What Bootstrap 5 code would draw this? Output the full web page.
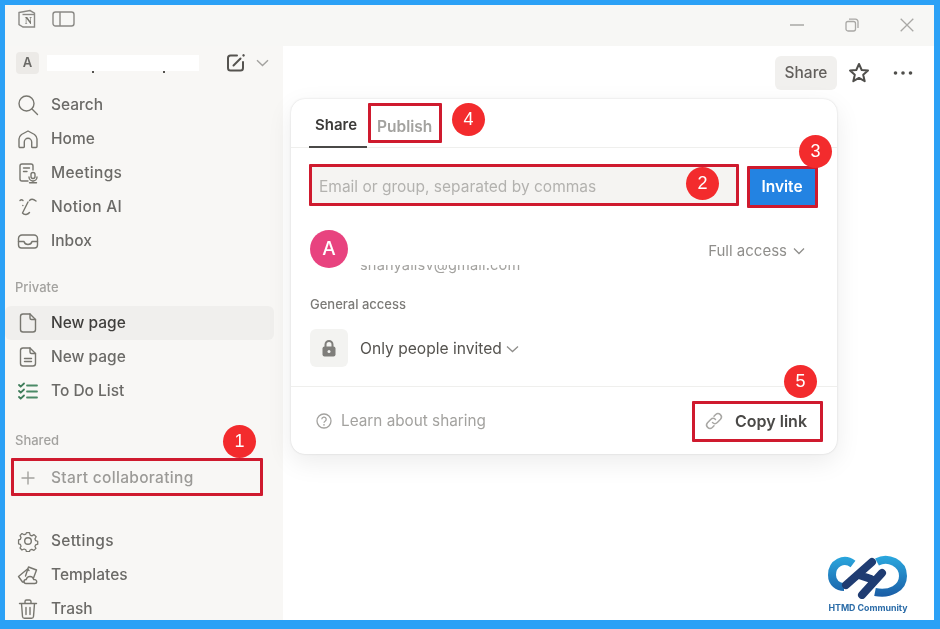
<!doctype html>
<html lang="en">
<head>
<meta charset="utf-8">
<title>Notion share</title>
<link href="https://cdn.jsdelivr.net/npm/bootstrap@5.3.0/dist/css/bootstrap.min.css" rel="stylesheet">
<style>
html,body{height:100%;margin:0;overflow:hidden;background:#fff}
body{font-family:Inter,"Liberation Sans",sans-serif}
.frame{position:relative;width:940px;height:629px;border-style:solid;border-color:#2ba1f6;border-width:5px 6px 9px 5px;background:#fff;overflow:hidden;filter:blur(.35px)}
.anno-layer{position:absolute;inset:0;pointer-events:none}
.titlebar{height:41px;background:#f7f7f5;flex:none}
.ti{stroke:#8a8985;fill:none;stroke-width:1.4}
.tleft{gap:15px;padding-left:12px;margin-top:-13px}
.winbtns{gap:41px;padding-right:20px;margin-top:-2px}
.side{width:278px;flex:none;background:#f8f7f5;overflow:hidden}
.mainpane{min-width:0}
.ws{height:34px;padding-left:11px}
.ws-a{width:23px;height:22px;background:#eceae7;border-radius:4px;color:#6a6966;font-size:13px;font-weight:600}
.ws-name{position:relative;width:152px;height:16px;background:#fff;margin-left:8px}
.ws-name::after{content:"";position:absolute;left:45px;top:16px;width:2px;height:2px;background:#55534f;box-shadow:71px 0 #55534f}
.ws-tail{margin-left:26px;gap:9px}
.navrows{margin-top:8px}
.srow{height:34px;padding-left:12px;gap:12px;color:#6b6a67;font-size:15.5px;font-weight:500;width:269px;border-radius:6px;white-space:nowrap}
.srow svg{width:22px;height:22px;flex:none;stroke:#77766f;fill:none;stroke-width:1.4;stroke-linecap:round;stroke-linejoin:round}
.srow.on{background:#f0efed;color:#3f3e3c}
.srow.dim{color:#9b9a97;letter-spacing:.32px}
.srow.dim svg{stroke:#a3a29e}
.stretchy{letter-spacing:.3px}
.sl{height:20px;line-height:20px;padding-left:10px;font-size:13px;font-weight:500;color:#a3a29f}
.m-private{margin-top:19px}.m-afterprivate{margin-top:9px}
.m-shared{margin-top:22px}.m-aftershared{margin-top:11px}.m-bottom{margin-top:29px}
.tools{height:54px;padding-left:492px}
.sharebtn{width:62px;height:34px;border-radius:6px;background:#f1f0ee;color:#625f5c;font-size:15.5px;font-weight:500}
.tools svg{flex:none}
.pop{position:absolute;left:286px;top:94px;width:546px;height:355px;background:#fff;border-radius:14px;box-shadow:0 0 2px rgba(15,15,15,.16),0 8px 26px rgba(15,15,15,.08)}
.tabs{height:49px;padding-left:18px;border-bottom:1px solid #efefed}
.tb{height:49px;padding-top:6px;font-weight:600;white-space:nowrap}
.tb-on{width:58px;padding-right:4px;font-size:15px;color:#3c3b39;border-bottom:2px solid #4a4947;justify-content:center}
.tb-off{color:#a3a29f;font-size:15.5px;margin-left:10px}
.inviteline{padding:18px 0 0 19px;height:70px}
.emailbox{width:426px;height:40px;background:#f5f4f2;border-radius:4px;padding:2px 0 0 9px;color:#b3b2af;font-size:15.5px;font-weight:400}
.invitebtn{width:68px;height:40px;margin-left:12px;background:#2383e2;border-radius:4px;color:#fff;font-size:15.5px;font-weight:600;border:0;padding:2px 0 0}
.person{height:62px;padding:0 32px 0 19px}
.avatar{width:38px;height:38px;border-radius:50%;background:#e8437f;color:#fff;font-size:19px;font-weight:500;flex:none}
.masked{position:relative;margin:31px 0 0 12px;font-size:14.6px;letter-spacing:.15px;line-height:18px;color:#a3a29f;white-space:nowrap}
.masked::after{content:"";position:absolute;left:-2px;right:-2px;top:-4px;height:13px;background:#fff}
.fullacc{color:#8f8e8b;font-size:15px;gap:6px;padding-top:4px}
.gtitle{margin:14px 0 0 19px;height:20px;line-height:20px;font-size:13px;font-weight:500;color:#7b7a77}
.glock{margin:15px 0 0 19px;gap:12px;height:38px}
.lockbox{width:38px;height:38px;background:#f3f3f1;border-radius:6px;flex:none}
.gtext{color:#55534f;font-size:15.6px;white-space:nowrap;padding-top:2px}
.popfoot{margin-top:19px;height:68px;border-top:1px solid #efefed;padding:1px 30px 0 25px}
.learn{gap:9px;color:#a3a29f;font-size:15.3px;white-space:nowrap}
.copy{gap:11px;color:#4a4947;font-size:16px;font-weight:600;white-space:nowrap}
.rbox{position:absolute;border:3px solid #cf1a2e;border-radius:1px}
.b1{left:6px;top:453px;width:252px;height:38px}
.b4{left:363px;top:98px;width:74px;height:40px}
.b2{left:304px;top:159px;width:430px;height:42px}
.b3{left:742px;top:161px;width:71px;height:42px}
.b5{left:687px;top:396px;width:131px;height:41px}
.pin{position:absolute;width:33px;height:33px;border-radius:50%;background:#f32b2d;color:#fff;font-size:18px;font-weight:500;font-family:"Liberation Sans",sans-serif;display:flex;align-items:center;justify-content:center}
.p1{left:218px;top:420px}.p2{left:681px;top:162px}.p3{left:794px;top:130px}.p4{left:447px;top:98px}.p5{left:779px;top:360px}
.brand{position:absolute;left:823px;top:550px;width:80px}
.brand svg{display:block}
.brand-t{font-size:8.8px;font-weight:700;color:#2b6ca8;line-height:11px;white-space:nowrap;margin-top:3px;text-align:center}
</style>
</head>
<body>
<div class="frame d-flex flex-column">
  <div class="titlebar d-flex align-items-center">
    <div class="d-flex align-items-center tleft">
      <svg width="20" height="20" viewBox="0 0 20 20"><path class="ti" d="M2 3.5 13 1.6l4.500 2.600V18H6L2 15.500Z"/><path class="ti" d="M5.500 5.500H17"/><text x="11.300" y="15" text-anchor="middle" font-size="10" font-weight="700" fill="#77766f" font-family="Liberation Serif, serif">N</text></svg>
      <svg width="24" height="18" viewBox="0 0 24 18"><rect class="ti" x="1" y="2" width="21" height="14" rx="2.500"/><path class="ti" d="M8 2v14"/></svg>
    </div>
    <div class="d-flex align-items-center ms-auto winbtns">
      <svg width="14" height="14" viewBox="0 0 14 14"><path d="M0 7h14" stroke="#a9a8a5" stroke-width="1.500"/></svg>
      <svg width="14" height="14" viewBox="0 0 14 14" fill="none" stroke="#a9a8a5" stroke-width="1.300"><rect x="1" y="3.500" width="9.500" height="9.500" rx="2"/><path d="M4 1.200h6.500a2.500 2.500 0 0 1 2.500 2.500V10"/></svg>
      <svg width="14" height="14" viewBox="0 0 14 14"><path d="M.7.700l12.600 12.600M13.300.700.700 13.300" stroke="#a9a8a5" stroke-width="1.300"/></svg>
    </div>
  </div>
  <div class="d-flex flex-grow-1" style="min-height:0">
    <aside class="side">
      <div class="ws d-flex align-items-center">
        <div class="ws-a d-flex align-items-center justify-content-center">A</div>
        <div class="ws-name"></div>
        <div class="ws-tail d-flex align-items-center">
          <svg width="22" height="22" viewBox="0 0 22 22" fill="none" stroke="#55534f" stroke-width="2" stroke-linecap="round"><path d="M12 3.500H5.500a2.500 2.500 0 0 0-2.500 2.500v10a2.500 2.500 0 0 0 2.500 2.500h10a2.500 2.500 0 0 0 2.500-2.500V10"/><path d="M8.500 13.500 15.500 6.500"/><path d="M18.500 3.300l.1.100" stroke-width="2.400"/></svg>
          <svg width="13" height="8" viewBox="0 0 13 8" fill="none" stroke="#a3a29f" stroke-width="1.400"><path d="M1 1.200 6.500 6.500 12 1.200"/></svg>
        </div>
      </div>
      <div class="navrows">
        <div class="srow d-flex align-items-center"><svg viewBox="0 0 22 22"><circle cx="9.500" cy="9.500" r="7.500"/><path d="M15 15l5.500 5.500"/></svg>Search</div>
        <div class="srow d-flex align-items-center"><svg viewBox="0 0 22 22"><path d="M2 18.500V11c0-2 1-3.300 2.500-4.500L11 3l6.500 3.500C19 7.700 20 9 20 11v7.500a1 1 0 0 1-1 1h-3.500a.8.800 0 0 1-.8-.8V14a3.700 3.700 0 0 0-7.400 0v4.700a.8.800 0 0 1-.8.800H3a1 1 0 0 1-1-1Z"/></svg>Home</div>
        <div class="srow d-flex align-items-center"><svg viewBox="0 0 22 22"><path d="M11 19H5a2 2 0 0 1-2-2V4a2 2 0 0 1 2-2h9a2 2 0 0 1 2 2v4"/><path d="M6.500 6h6M6.500 9.500h3.500"/><rect x="14" y="10.500" width="4" height="6" rx="2"/><path d="M12 15a4 4 0 0 0 8 0M16 19v1.500M12.500 20.800h7"/></svg><span class="stretchy">Meetings</span></div>
        <div class="srow d-flex align-items-center"><svg viewBox="0 0 22 22"><path d="M3 4.500c1-1 2-1 3 0M12.500 4.500c1.500-1.500 4-1.500 6.500.5"/><path d="M11 6 5.500 17c2 2.500 5.500 1.500 7-.5"/><path d="M5.800 9.500l.1.100"/></svg><span class="stretchy">Notion AI</span></div>
        <div class="srow d-flex align-items-center"><svg viewBox="0 0 22 22"><path d="M1.500 12V8.500a3.500 3.500 0 0 1 3.500-3.500h12a3.500 3.500 0 0 1 3.500 3.500V15a3 3 0 0 1-3 3h-13a3 3 0 0 1-3-3Z"/><path d="M1.500 11.500H7c.5 2 2 3 4 3s3.500-1 4-3h5.500"/></svg>Inbox</div>
      </div>
      <div class="sl m-private">Private</div>
      <div class="m-afterprivate">
        <div class="srow on d-flex align-items-center"><svg viewBox="0 0 22 22"><path d="M13 2H6a2.500 2.500 0 0 0-2.500 2.500v13A2.500 2.500 0 0 0 6 20h10a2.500 2.500 0 0 0 2.500-2.500V7.500Z"/><path d="M13 2v4a1.500 1.500 0 0 0 1.500 1.500h4"/></svg>New page</div>
        <div class="srow d-flex align-items-center"><svg viewBox="0 0 22 22"><path d="M13 2H6a2.500 2.500 0 0 0-2.500 2.500v13A2.500 2.500 0 0 0 6 20h10a2.500 2.500 0 0 0 2.500-2.500V7.500Z"/><path d="M13 2v4a1.500 1.500 0 0 0 1.500 1.500h4M7.500 12.500h7M7.500 15.500h7"/></svg>New page</div>
        <div class="srow d-flex align-items-center"><svg viewBox="0 0 22 22" style="stroke:#3f7d5a;stroke-width:1.800"><path d="M2 5l1.700 1.700L7 3.500M2 11l1.700 1.700L7 9.500M2 17l1.700 1.700L7 15.500"/><path d="M10 5.500h10M10 11.500h10M10 17.500h10" style="stroke:#4a8a66"/></svg>To Do List</div>
      </div>
      <div class="sl m-shared">Shared</div>
      <div class="srow dim m-aftershared d-flex align-items-center"><svg viewBox="0 0 22 22"><path d="M11 5v12M5 11h12"/></svg>Start collaborating</div>
      <div class="m-bottom">
        <div class="srow d-flex align-items-center"><svg viewBox="0 0 22 22"><circle cx="11" cy="11" r="3.300"/><path d="M9.300 1.800h3.400l.7 2.700 1.900.8 2.400-1.400 2.400 2.400-1.400 2.400.8 1.900 2.300.7v3.200l-2.300.7-.8 1.900 1.100 2.100-2.200 2.200-2.400-1.100-1.900.7-.7 1.900H9.300l-.7-2.200-1.900-.8-2.400 1.100-2.200-2.200 1.200-2.100-.8-1.900-2-.7V9.800l2-.7.8-1.900-1.200-2.200 2.200-2.300 2.400 1.300 1.900-.7Z" transform="translate(1.100 1.100) scale(.9)"/></svg><span class="stretchy">Settings</span></div>
        <div class="srow d-flex align-items-center"><svg viewBox="0 0 22 22"><path d="M7 18H5.500L1.500 12.500 10.500 5 12 6.500"/><path d="M8.500 12l3-9 8 3-3 8"/><path d="M9 19.500c-1 0-2-.8-2-2s1-2 2.200-2c.5-2 2-3 3.800-3s3.300 1.200 3.700 3c1.600-.2 3 .8 3 2.200s-1 1.800-2 1.800Z"/></svg>Templates</div>
        <div class="srow d-flex align-items-center"><svg viewBox="0 0 22 22"><path d="M2.500 5.500h17M8 5.500V3.500A1.500 1.500 0 0 1 9.500 2h3A1.500 1.500 0 0 1 14 3.500v2M4.500 5.500l1 13a2 2 0 0 0 2 1.800h7a2 2 0 0 0 2-1.800l1-13M9 9.500v7M13 9.500v7"/></svg>Trash</div>
      </div>
    </aside>
    <main class="mainpane flex-grow-1">
      <div class="tools d-flex align-items-center">
        <div class="sharebtn d-flex align-items-center justify-content-center">Share</div>
        <svg width="24" height="24" viewBox="0 0 24 24" fill="none" stroke="#4f4e4b" stroke-width="2" stroke-linejoin="round" style="margin-left:10px"><path d="M12 3l2.700 6 6.300.6-4.800 4.200 1.500 6.400L12 16.900l-5.700 3.300 1.500-6.400L3 9.600 9.300 9Z"/></svg>
        <svg width="24" height="24" viewBox="0 0 24 24" fill="#4f4e4b" style="margin-left:20px"><circle cx="4.500" cy="12" r="1.800"/><circle cx="12" cy="12" r="1.800"/><circle cx="19.500" cy="12" r="1.800"/></svg>
      </div>
    </main>
  </div>

  <section class="pop">
    <div class="tabs d-flex">
      <div class="tb tb-on d-flex align-items-center">Share</div>
      <div class="tb tb-off d-flex align-items-center">Publish</div>
    </div>
    <div class="inviteline d-flex">
      <div class="emailbox d-flex align-items-center">Email or group, separated by commas</div>
      <button class="invitebtn" type="button">Invite</button>
    </div>
    <div class="person d-flex align-items-center">
      <div class="avatar d-flex align-items-center justify-content-center">A</div>
      <div class="masked">shanyalisv@gmail.com</div>
      <div class="fullacc d-flex align-items-center ms-auto">Full access <svg width="12" height="8" viewBox="0 0 12 8" fill="none" stroke="#8f8e8b" stroke-width="1.300"><path d="M1 1.500 6 6.500l5-5"/></svg></div>
    </div>
    <div class="gtitle">General access</div>
    <div class="glock d-flex align-items-center">
      <div class="lockbox d-flex align-items-center justify-content-center"><svg width="16" height="18" viewBox="0 0 16 18"><path d="M4.500 8V5.500a3.500 3.500 0 0 1 7 0V8" fill="none" stroke="#7f7e7b" stroke-width="2"/><rect x="1.500" y="7.500" width="13" height="10" rx="2" fill="#7f7e7b"/><circle cx="8" cy="12.500" r="1.500" fill="#f3f3f1"/></svg></div>
      <div class="gtext d-flex align-items-center">Only people invited<svg class="ms-1" width="13" height="8" viewBox="0 0 13 8" fill="none" stroke="#8f8e8b" stroke-width="1.300"><path d="M1 1.500 6.500 6.500l5.500-5"/></svg></div>
    </div>
    <div class="popfoot d-flex align-items-center justify-content-between">
      <div class="learn d-flex align-items-center"><svg width="16" height="16" viewBox="0 0 16 16" fill="none" stroke="#a3a29f" stroke-width="1.300"><circle cx="8" cy="8" r="7"/><path d="M5.800 6.300a2.200 2.200 0 1 1 3.300 1.900c-.7.400-1.100.8-1.100 1.600"/><path d="M8 11.800v.1" stroke-linecap="round" stroke-width="1.600"/></svg>Learn about sharing</div>
      <div class="copy d-flex align-items-center"><svg width="20" height="20" viewBox="0 0 20 20" fill="none" stroke="#a8a7a4" stroke-width="1.500" stroke-linecap="round"><path d="M8.500 11.500a3.400 3.400 0 0 0 4.800 0l3.200-3.200a3.400 3.400 0 0 0-4.800-4.800L10 5.200"/><path d="M11.500 8.500a3.400 3.400 0 0 0-4.800 0l-3.200 3.200a3.400 3.400 0 0 0 4.800 4.800l1.700-1.700"/></svg>Copy link</div>
    </div>
  </section>

  <div class="brand">
    <svg width="80" height="44" viewBox="0 0 80 44" fill="none">
      <defs><linearGradient id="lg" gradientUnits="userSpaceOnUse" x1="0" y1="2" x2="0" y2="42"><stop offset="0" stop-color="#2aa6dd"/><stop offset="1" stop-color="#1a5ca5"/></linearGradient></defs>
      <path d="M25 9C16 2 4 8 4 20c0 8 6 12 12 12" stroke="url(#lg)" stroke-width="8"/>
      <path d="M49 7C60 1 75 8 75 21 75 33 62 40 47 37" stroke="url(#lg)" stroke-width="8"/>
      <path d="M44 7 18 30M54 18 34 40M31 20 43 24" stroke="#1f3c72" stroke-width="8" stroke-linecap="round"/>
    </svg>
    <div class="brand-t">HTMD Community</div>
  </div>

  <div class="anno-layer">
    <div class="rbox b1"></div><div class="rbox b2"></div><div class="rbox b3"></div><div class="rbox b4"></div><div class="rbox b5"></div>
    <div class="pin p1">1</div><div class="pin p2">2</div><div class="pin p3">3</div><div class="pin p4">4</div><div class="pin p5">5</div>
  </div>
</div>
<script src="https://cdn.jsdelivr.net/npm/bootstrap@5.3.0/dist/js/bootstrap.bundle.min.js"></script>
</body>
</html>
